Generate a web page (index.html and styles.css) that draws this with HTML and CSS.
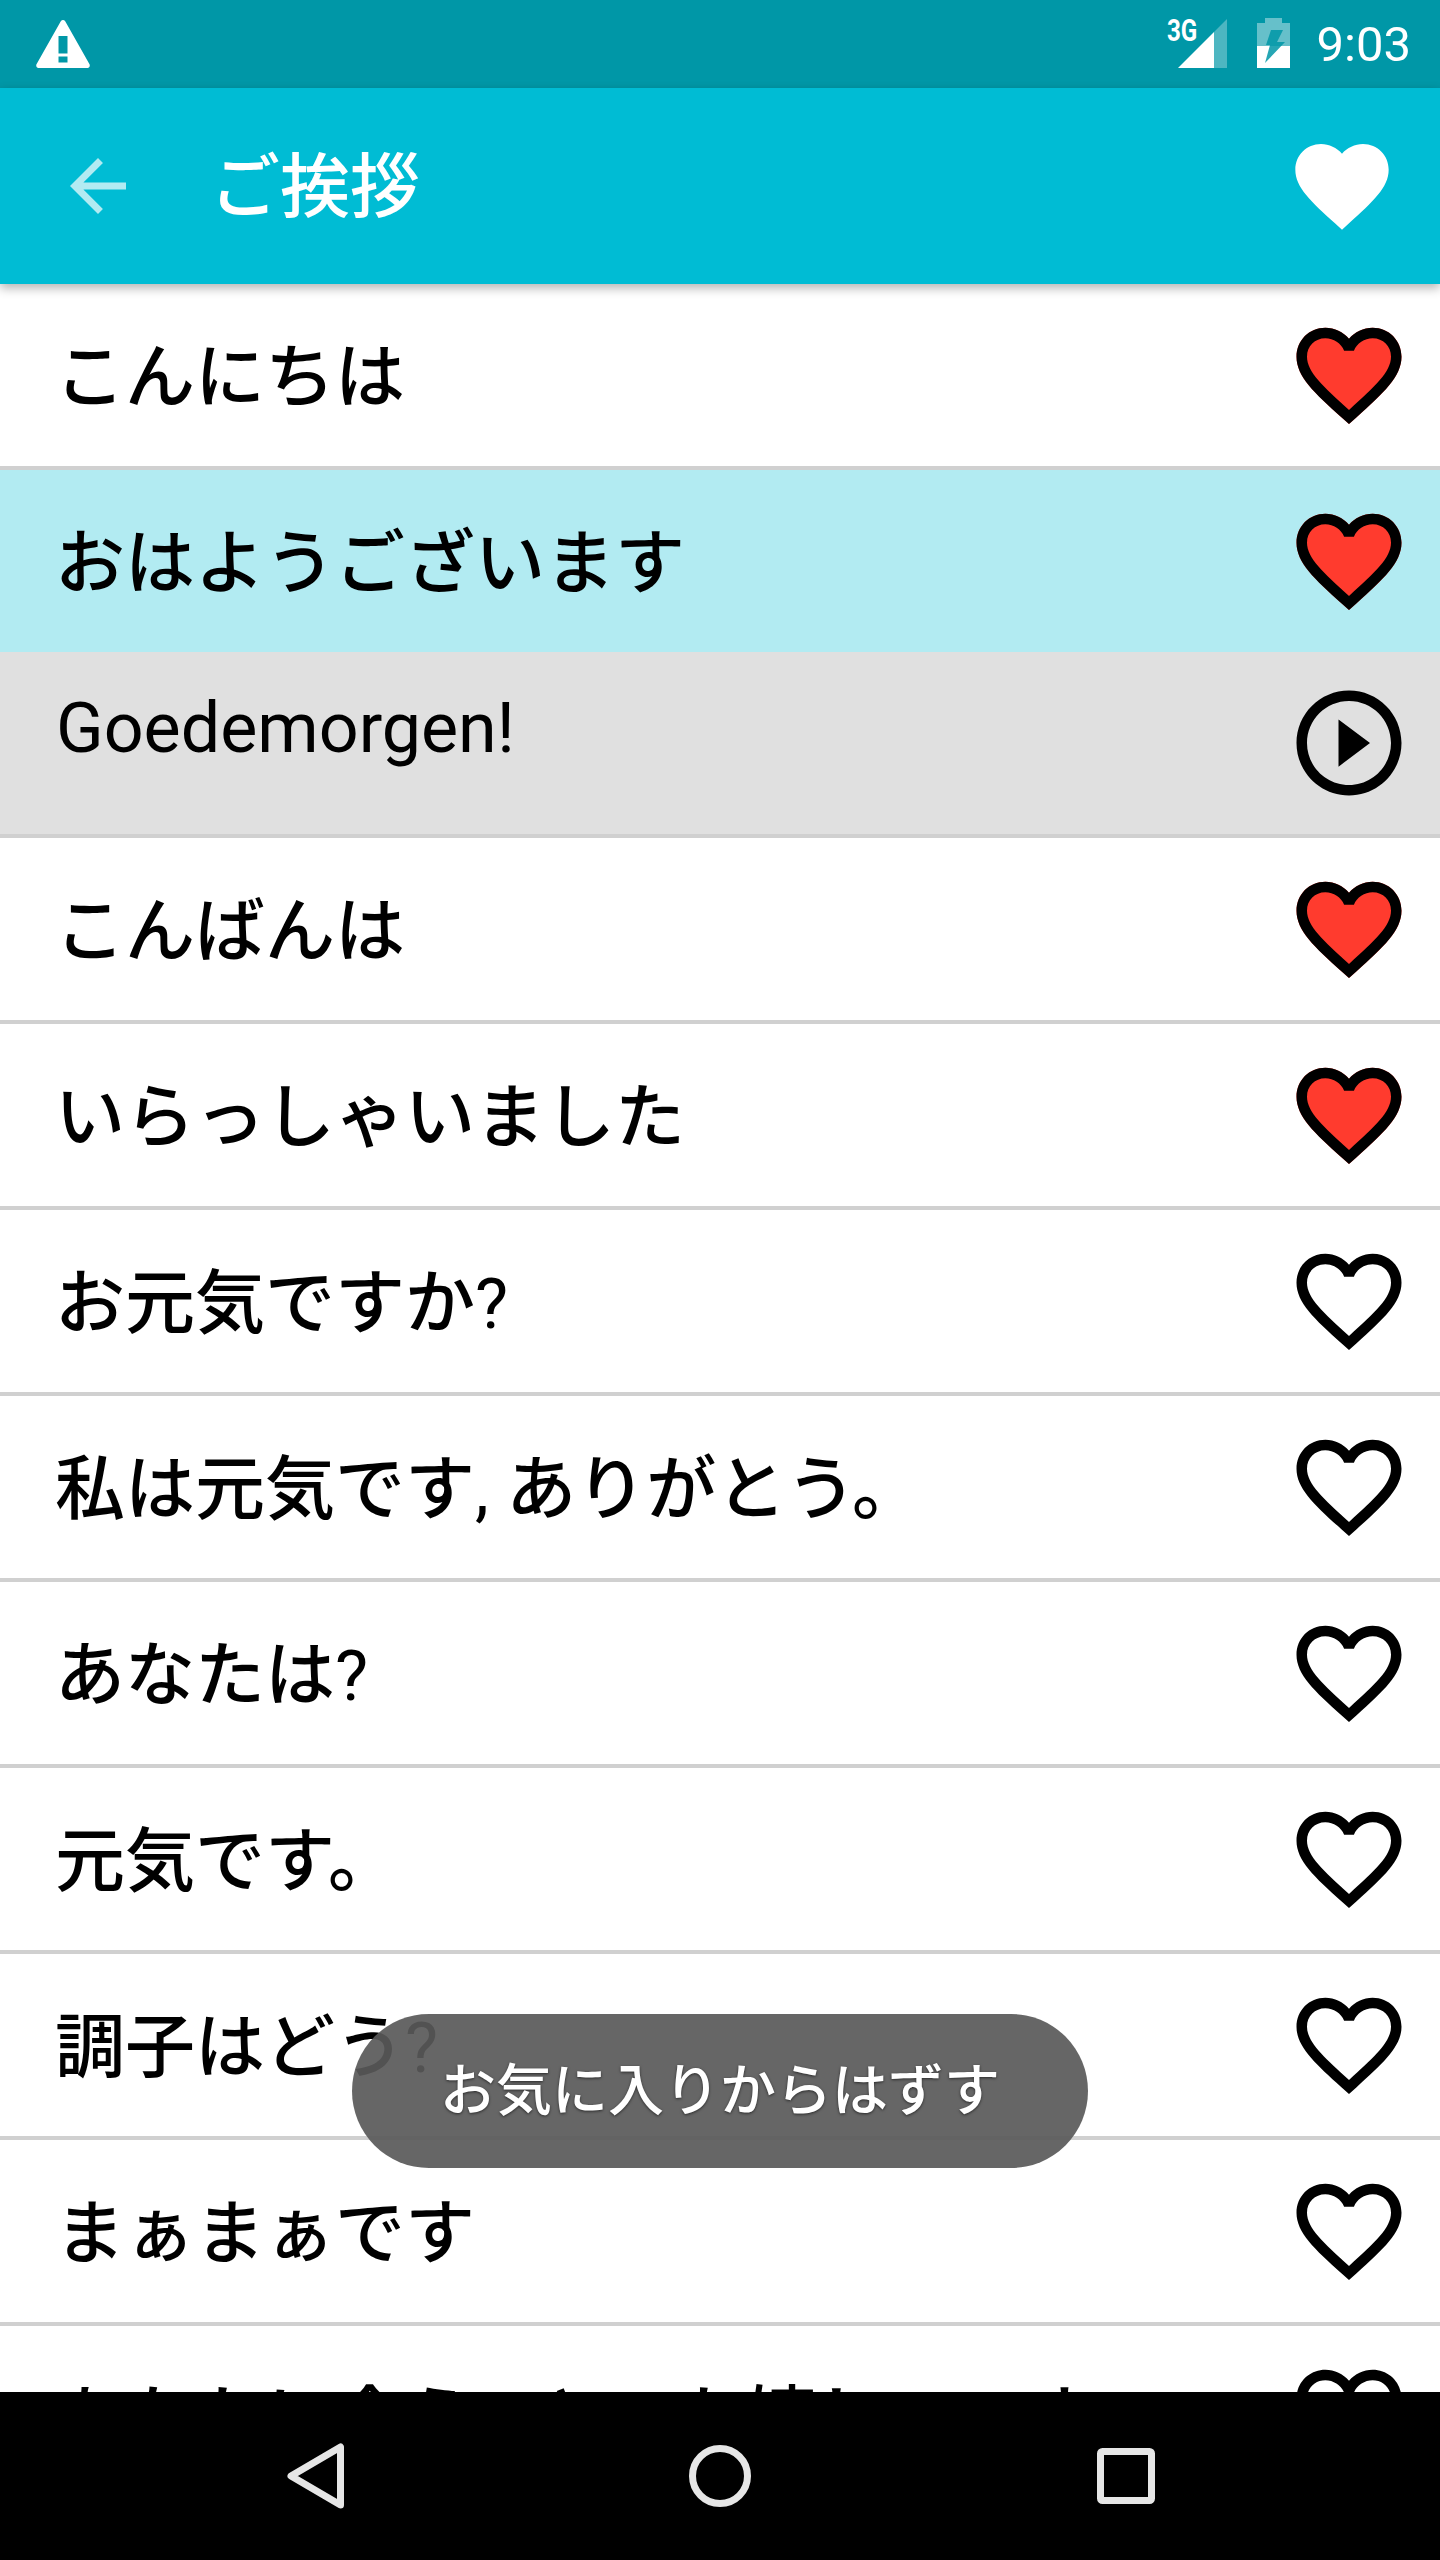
FILE: index.html
```html
<!DOCTYPE html>
<html lang="ja">
<head>
<meta charset="utf-8">
<title>ご挨拶</title>
<link rel="stylesheet" href="styles.css">
</head>
<body>
<svg class="defs" aria-hidden="true">
  <symbol id="heart-fill" viewBox="0 0 24 24"><path d="M12 21.35l-1.45-1.32C5.4 15.36 2 12.28 2 8.5 2 5.42 4.42 3 7.5 3c1.74 0 3.41.81 4.5 2.09C13.09 3.81 14.76 3 16.5 3 19.58 3 22 5.42 22 8.5c0 3.78-3.4 6.86-8.55 11.54L12 21.35z"/></symbol>
  <symbol id="heart-line" viewBox="0 0 24 24"><path d="M16.5 3c-1.74 0-3.41.81-4.5 2.09C10.91 3.81 9.24 3 7.5 3 4.42 3 2 5.42 2 8.5c0 3.78 3.4 6.86 8.55 11.54L12 21.35l1.45-1.32C18.6 15.36 22 12.28 22 8.5 22 5.42 19.58 3 16.5 3zm-4.4 15.55l-.1.1-.1-.1C7.14 14.24 4 11.39 4 8.5 4 6.5 5.5 5 7.5 5c1.54 0 3.04.99 3.57 2.36h1.87C13.46 5.99 14.96 5 16.5 5c2 0 3.5 1.5 3.5 3.5 0 2.89-3.14 5.74-7.9 10.05z"/></symbol>
  <symbol id="heart-red" viewBox="0 0 24 24"><path class="red" d="M12 21.35l-1.45-1.32C5.4 15.36 2 12.28 2 8.5 2 5.42 4.42 3 7.5 3c1.74 0 3.41.81 4.5 2.09C13.09 3.81 14.76 3 16.5 3 19.58 3 22 5.42 22 8.5c0 3.78-3.4 6.86-8.55 11.54L12 21.35z"/><path d="M16.5 3c-1.74 0-3.41.81-4.5 2.09C10.91 3.81 9.24 3 7.5 3 4.42 3 2 5.42 2 8.5c0 3.78 3.4 6.86 8.55 11.54L12 21.35l1.45-1.32C18.6 15.36 22 12.28 22 8.5 22 5.42 19.58 3 16.5 3zm-4.4 15.55l-.1.1-.1-.1C7.14 14.24 4 11.39 4 8.5 4 6.5 5.5 5 7.5 5c1.54 0 3.04.99 3.57 2.36h1.87C13.46 5.99 14.96 5 16.5 5c2 0 3.5 1.5 3.5 3.5 0 2.89-3.14 5.74-7.9 10.05z"/></symbol>
  <symbol id="play" viewBox="0 0 24 24"><path d="M10 16.5l6-4.5-6-4.5v9zM12 2C6.48 2 2 6.48 2 12s4.48 10 10 10 10-4.48 10-10S17.52 2 12 2zm0 18c-4.41 0-8-3.59-8-8s3.59-8 8-8 8 3.59 8 8-3.59 8-8 8z"/></symbol>
</svg>

<div class="screen">
  <header class="status">
    <svg class="warn" viewBox="0 0 54 48"><path fill="#fff" fill-rule="evenodd" d="M24.8 1.2c1-1.6 3.4-1.6 4.4 0l24.3 43c.8 1.6-.2 3.8-2 3.8H2.500C.7 48-.3 45.800.5 44.200zM22.500 16v17.500h9V16zm0 20.500V42.500h9v-6z"/></svg>
    <div class="status-right">
      <span class="net">3G</span>
      <svg class="signal" viewBox="0 0 49 49"><path fill="#fff" fill-opacity=".3" d="M36 13L49 0v49H36z"/><path fill="#fff" d="M0 49L36 13v36z"/></svg>
      <svg class="battery" viewBox="0 0 33 50"><path fill="#fff" fill-opacity=".4" d="M8 0h17v5h8v23H0V5h8z"/><path fill="#fff" d="M0 28h33v22H0z"/><path fill="#0097a7" fill-opacity=".85" d="M14 12h12l-6 12h8L8 45l5-18H9z"/></svg>
      <span class="clock">9:03</span>
    </div>
  </header>

  <div class="appbar">
    <svg class="back" viewBox="0 0 24 24"><path d="M20 11H7.830l5.590-5.590L12 4l-8 8 8 8 1.410-1.410L7.830 13H20v-2z"/></svg>
    <h1 class="title">ご挨拶</h1>
    <svg class="fav"><use href="#heart-fill"/></svg>
  </div>

  <main class="list">
    <div class="row"><span class="text">こんにちは</span><svg class="ico"><use href="#heart-red"/></svg></div>
    <div class="row selected"><span class="text">おはようございます</span><svg class="ico"><use href="#heart-red"/></svg></div>
    <div class="row detail"><span class="text latin">Goedemorgen!</span><svg class="ico"><use href="#play"/></svg></div>
    <div class="row"><span class="text">こんばんは</span><svg class="ico"><use href="#heart-red"/></svg></div>
    <div class="row"><span class="text">いらっしゃいました</span><svg class="ico"><use href="#heart-red"/></svg></div>
    <div class="row"><span class="text">お元気ですか<span class="punct">?</span></span><svg class="ico"><use href="#heart-line"/></svg></div>
    <div class="row"><span class="text">私は元気です<span class="punct">, </span>ありがとう。</span><svg class="ico"><use href="#heart-line"/></svg></div>
    <div class="row"><span class="text">あなたは<span class="punct">?</span></span><svg class="ico"><use href="#heart-line"/></svg></div>
    <div class="row"><span class="text">元気です。</span><svg class="ico"><use href="#heart-line"/></svg></div>
    <div class="row"><span class="text">調子はどう<span class="punct">?</span></span><svg class="ico"><use href="#heart-line"/></svg></div>
    <div class="row"><span class="text">まぁまぁです</span><svg class="ico"><use href="#heart-line"/></svg></div>
    <div class="row"><span class="text">あなたに会えてとても嬉しいです</span><svg class="ico"><use href="#heart-line"/></svg></div>
    <div class="toast">お気に入りからはずす</div>
  </main>

  <nav class="navbar">
    <svg class="nav-back" viewBox="0 0 58 66"><path d="M54.500 4v58L5 33z"/></svg>
    <svg class="nav-home" viewBox="0 0 62 62"><circle cx="31" cy="31" r="27.500"/></svg>
    <svg class="nav-recent" viewBox="0 0 58 56"><rect x="3.500" y="3.500" width="51" height="49" rx="2"/></svg>
  </nav>
</div>
</body>
</html>
```

FILE: styles.css
```css
* { box-sizing: border-box; }

html, body {
  margin: 0;
  padding: 0;
  background: #fff;
}

body {
  font-family: "Roboto", "Noto Sans CJK JP", sans-serif;
  color: #000;
}

.defs {
  display: none;
}

.red {
  fill: #ff3b2e;
}

.screen {
  width: 1440px;
  height: 2560px;
  display: flex;
  flex-direction: column;
  overflow: hidden;
}

/* status bar */
.status {
  flex: 0 0 88px;
  background: #0097a7;
  display: flex;
  align-items: center;
  justify-content: space-between;
  padding: 0 29px 0 36px;
}

.warn {
  width: 54px;
  height: 48px;
}

.status-right {
  display: flex;
  align-items: flex-start;
  height: 88px;
}

.net {
  width: 30px;
  margin-top: 15px;
  font-size: 31px;
  line-height: 32px;
  font-weight: 700;
  color: #fff;
  white-space: nowrap;
  transform: scaleX(.78);
  transform-origin: left top;
}

.signal {
  width: 49px;
  height: 49px;
  margin: 19px 0 0 -19px;
}

.battery {
  width: 33px;
  height: 50px;
  margin: 18px 0 0 30px;
}

.clock {
  margin: 16px 0 0 27px;
  font-size: 49px;
  line-height: 58px;
  font-weight: 400;
  color: #fff;
}

/* app bar */
.appbar {
  flex: 0 0 196px;
  background: #00bcd4;
  display: flex;
  align-items: center;
  padding: 0 42px 0 56px;
  position: relative;
  z-index: 2;
  box-shadow: 0 4px 10px rgba(0, 0, 0, .3);
}

.back {
  width: 84px;
  height: 84px;
  fill: #b2ebf2;
}

.title {
  flex: 1;
  margin: 3px 0 0 70px;
  font-size: 70px;
  line-height: 96px;
  font-weight: 500;
  color: #fff;
}

.fav {
  width: 112px;
  height: 112px;
  fill: #fff;
}

/* list */
.list {
  flex: 1;
  min-height: 0;
  position: relative;
  overflow: hidden;
}

.row {
  height: 186px;
  display: flex;
  align-items: center;
  justify-content: space-between;
  padding: 0 28px 0 55px;
  border-bottom: 4px solid #d0d0d0;
}

.row.selected {
  height: 182px;
  border-bottom: 0;
  background: #b2ebf2;
}

.row.detail {
  background: #e0e0e0;
}

.text {
  margin-top: 5px;
  font-size: 70px;
  line-height: 96px;
  font-weight: 500;
  white-space: pre;
}

.punct {
  font-weight: 400;
}

.latin {
  margin-top: -30px;
  margin-left: 1px;
  font-weight: 400;
}

.ico {
  width: 126px;
  height: 126px;
  flex: none;
  fill: #000;
}

.toast {
  position: absolute;
  left: 352px;
  top: 1730px;
  width: 736px;
  height: 154px;
  border-radius: 77px;
  background: rgba(89, 89, 89, .92);
  color: #fff;
  font-size: 56px;
  line-height: 154px;
  font-weight: 500;
  text-align: center;
  text-shadow: 0 1px 3px rgba(0, 0, 0, .6);
}

/* nav bar */
.navbar {
  flex: 0 0 168px;
  background: #000;
  display: flex;
  align-items: center;
  position: relative;
  z-index: 2;
}

.navbar svg {
  fill: none;
  stroke: #e6e6e6;
  stroke-width: 7;
  stroke-linejoin: round;
}

.nav-back {
  width: 58px;
  height: 66px;
  margin-left: 286px;
}

.nav-home {
  width: 62px;
  height: 62px;
  margin-left: 345px;
}

.nav-recent {
  width: 58px;
  height: 56px;
  margin-left: 346px;
}
```
